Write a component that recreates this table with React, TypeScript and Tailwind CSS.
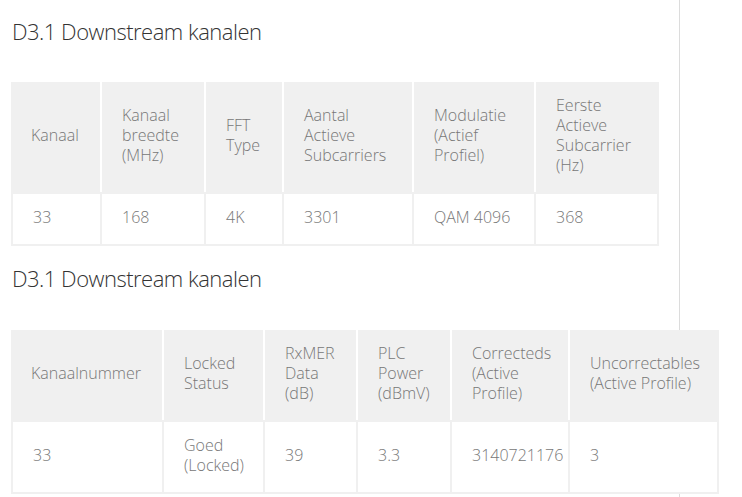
const font = { fontFamily: '"Open Sans", "Liberation Sans", sans-serif' };

const Header = ({ children }: { children: React.ReactNode }) => (
  <div className="flex items-center bg-[#f0f0f0] px-5 pt-[13px] pb-[17px] text-[16px] leading-5 font-light text-[#777]">
    <span>{children}</span>
  </div>
);

const Cell = ({ children }: { children: React.ReactNode }) => (
  <div className="flex items-center bg-white px-5 pt-[13px] pb-[17px] text-[16px] leading-5 font-light text-[#777]">
    <span>{children}</span>
  </div>
);

export default function App() {
  return (
    <div style={font} className="min-h-screen w-[680px] border-r border-[#dcdcdc] bg-white pl-[11px]">
      {/* OFDM kanalen */}
      <h2 className="pt-[15px] pl-px text-[22px] leading-8 font-light tracking-[-0.5px] text-[#333]">D3.1 Downstream kanalen</h2>
      <div className="mt-[35px] w-[648px]">
        <div className="grid grid-cols-[89px_102px_76px_128px_120px_123px] gap-x-[2px] bg-white">
          <Header>Kanaal</Header>
          <Header>Kanaal breedte (MHz)</Header>
          <Header>FFT Type</Header>
          <Header>Aantal Actieve Subcarriers</Header>
          <Header>Modulatie (Actief Profiel)</Header>
          <Header>Eerste Actieve Subcarrier (Hz)</Header>
        </div>
        <div className="grid grid-cols-[87px_102px_76px_128px_120px_121px] gap-[2px] bg-[#f0f0f0] p-[2px]">
          <Cell>33</Cell>
          <Cell>168</Cell>
          <Cell>4K</Cell>
          <Cell>3301</Cell>
          <Cell>QAM 4096</Cell>
          <Cell>368</Cell>
        </div>
      </div>

      {/* Locked status / fouten */}
      <h2 className="mt-[16px] pl-px text-[22px] leading-8 font-light tracking-[-0.5px] text-[#333]">D3.1 Downstream kanalen</h2>
      <div className="relative mt-[36px] w-[708px]">
        <div className="grid grid-cols-[151px_99px_91px_92px_116px_149px] gap-x-[2px] bg-white">
          <Header>Kanaalnummer</Header>
          <Header>Locked Status</Header>
          <Header>RxMER Data (dB)</Header>
          <Header>PLC Power (dBmV)</Header>
          <Header>Correcteds (Active Profile)</Header>
          <Header>Uncorrectables (Active Profile)</Header>
        </div>
        <div className="grid grid-cols-[149px_99px_91px_92px_116px_147px] gap-[2px] bg-[#f0f0f0] p-[2px]">
          <Cell>33</Cell>
          <Cell>Goed (Locked)</Cell>
          <Cell>39</Cell>
          <Cell>3.3</Cell>
          <Cell>3140721176</Cell>
          <Cell>3</Cell>
        </div>
      </div>
    </div>
  );
}
